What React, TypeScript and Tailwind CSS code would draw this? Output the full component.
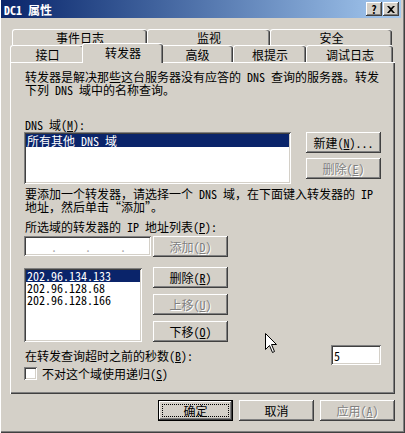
import type { ReactNode } from "react";

const raised =
  "bg-[#d4d0c8] shadow-[inset_-1px_-1px_#404040,inset_1px_1px_#ffffff,inset_-2px_-2px_#808080,inset_2px_2px_#d4d0c8]";
const sunken =
  "bg-white shadow-[inset_1px_1px_#808080,inset_-1px_-1px_#ffffff,inset_2px_2px_#404040,inset_-2px_-2px_#d4d0c8]";
const dis = "text-[#808080] [text-shadow:1px_1px_#ffffff]";

function Key({ k }: { k: string }) {
  return (
    <>
      (<u className="underline-offset-1">{k}</u>)
    </>
  );
}

function Btn({ children, off, className = "" }: { children: ReactNode; off?: boolean; className?: string }) {
  return (
    <div className={`h-[21px] w-[75px] flex items-center justify-center ${raised} ${off ? dis : ""} ${className}`}>
      {children}
    </div>
  );
}

function Tab({ children, className }: { children: ReactNode; className: string }) {
  return (
    <div
      className={`flex items-center justify-center border-l border-t border-white rounded-t-[3px] shadow-[inset_-1px_0_#404040,inset_-2px_0_#808080] ${className}`}
    >
      {children}
    </div>
  );
}

function Cursor() {
  return (
    <svg className="absolute left-[265px] top-[333px]" width="13" height="21" viewBox="0 0 13 21">
      <path d="M0.5 0.5 L0.5 16.5 L4.5 12.5 L7.5 19.5 L9.5 18.5 L6.5 11.5 L11.5 11.5 Z" fill="#fff" stroke="#000" strokeWidth="1" />
    </svg>
  );
}

export default function App() {
  return (
    <div className="relative w-[405px] h-[433px] overflow-hidden bg-[#d4d0c8] text-[12px] leading-[13px] text-black font-['Noto_Sans_Mono_CJK_SC','Noto_Sans_CJK_SC',sans-serif] shadow-[inset_1px_0_#ffffff,inset_-1px_-1px_#404040,inset_-2px_-2px_#808080]">
      <div className="flex flex-col pl-[1px] pr-[4px]">
        {/* title bar */}
        <div className="h-[18px] flex items-center bg-gradient-to-r from-[#0a246a] to-[#a6caf0] pl-[3px] pr-[2px]">
          <span className="text-white font-bold">DC1 属性</span>
          <div className="ml-auto flex gap-[1px]">
            <div className={`w-[16px] h-[14px] flex items-center justify-center font-bold text-[11px] ${raised}`}>?</div>
            <div className={`w-[16px] h-[14px] flex items-center justify-center ${raised}`}>
              <svg width="8" height="7" viewBox="0 0 8 7">
                <path d="M0 0h2l2 2 2-2h2L5 3.5 8 7H6L4 5 2 7H0l3-3.5z" fill="#000" />
              </svg>
            </div>
          </div>
        </div>

        {/* tabs */}
        <div className="mt-[11px] ml-[11px] flex h-[16px]">
          <Tab className="w-[135px] h-[16px]">事件日志</Tab>
          <Tab className="w-[123px] h-[16px]">监视</Tab>
          <Tab className="w-[122px] h-[16px]">安全</Tab>
        </div>
        <div className="ml-[9px] flex items-end h-[17px]">
          <Tab className="w-[74px] h-[17px]">接口</Tab>
          <Tab className="relative z-10 w-[81px] h-[20px] -mx-[2px] -mb-[1px] bg-[#d4d0c8] pb-[2px]">转发器</Tab>
          <Tab className="w-[72px] h-[17px]">高级</Tab>
          <Tab className="w-[73px] h-[17px]">根提示</Tab>
          <Tab className="w-[87px] h-[17px]">调试日志</Tab>
        </div>

        {/* panel */}
        <div className="ml-[9px] w-[385px] h-[332px] border-l border-t border-white shadow-[inset_-1px_-1px_#404040,inset_-2px_-2px_#808080] pl-[13px] pt-[7px] pr-[14px] flex flex-col">
          <p className="pl-[1px] whitespace-nowrap">
            转发器是解决那些这台服务器没有应答的 DNS 查询的服务器。转发
            <br />
            下列 DNS 域中的名称查询。
          </p>
          <div className="mt-[22px] pl-[1px]">
            DNS 域<Key k="M" />:
          </div>
          <div className="mt-[1px] flex">
            <div className={`w-[267px] h-[52px] p-[2px] ${sunken}`}>
              <div className="h-[13px] bg-[#0a246a] text-white pl-[1px] whitespace-nowrap">所有其他 DNS 域</div>
            </div>
            <div className="ml-[15px] flex flex-col gap-[5px]">
              <Btn>
                新建<Key k="N" />...
              </Btn>
              <Btn off>
                删除<Key k="E" />
              </Btn>
            </div>
          </div>
          <p className="mt-[3px] pl-[1px] whitespace-nowrap">
            要添加一个转发器，请选择一个 DNS 域，在下面键入转发器的 IP
            <br />
            地址，然后单击“添加”。
          </p>
          <div className="mt-[7px] pl-[1px]">
            所选域的转发器的 IP 地址列表<Key k="P" />:
          </div>
          <div className="mt-[3px] flex">
            <div className={`w-[127px] h-[20px] flex items-center pl-[4px] text-[#a8a8a8] ${sunken}`}>
              <span className="w-[29px] text-right">.</span>
              <span className="w-[34px] text-right">.</span>
              <span className="w-[35px] text-right">.</span>
            </div>
            <Btn off className="ml-[2px]">
              添加<Key k="D" />
            </Btn>
          </div>
          <div className="mt-[10px] flex">
            <div className={`mt-[1px] w-[118px] h-[74px] p-[2px] leading-[12px] ${sunken}`}>
              <div className="bg-[#0a246a] text-white pl-[1px] h-[12px]">202.96.134.133</div>
              <div className="pl-[1px]">202.96.128.68</div>
              <div className="pl-[1px]">202.96.128.166</div>
            </div>
            <div className="ml-[11px] flex flex-col gap-[6px]">
              <Btn>
                删除<Key k="R" />
              </Btn>
              <Btn off>
                上移<Key k="U" />
              </Btn>
              <Btn>
                下移<Key k="O" />
              </Btn>
            </div>
          </div>
          <div className="mt-[3px] flex items-center h-[20px]">
            <span className="pl-[1px]">
              在转发查询超时之前的秒数<Key k="B" />:
            </span>
            <div className={`ml-auto w-[50px] h-[20px] flex items-center pl-[3px] ${sunken}`}>5</div>
          </div>
          <div className="mt-[2px] flex items-center">
            <div className={`w-[13px] h-[13px] ${sunken}`} />
            <span className="ml-[5px]">
              不对这个域使用递归<Key k="S" />
            </span>
          </div>
        </div>

        {/* bottom buttons */}
        <div className="ml-[9px] w-[385px] mt-[6px] flex justify-end gap-[6px]">
          <div className="h-[21px] w-[75px] border border-black">
            <div className={`h-full w-full p-[3px] ${raised}`}>
              <div className="h-full w-full border border-dotted border-black flex items-center justify-center">确定</div>
            </div>
          </div>
          <Btn>取消</Btn>
          <Btn off>
            应用<Key k="A" />
          </Btn>
        </div>
      </div>
      <Cursor />
    </div>
  );
}
